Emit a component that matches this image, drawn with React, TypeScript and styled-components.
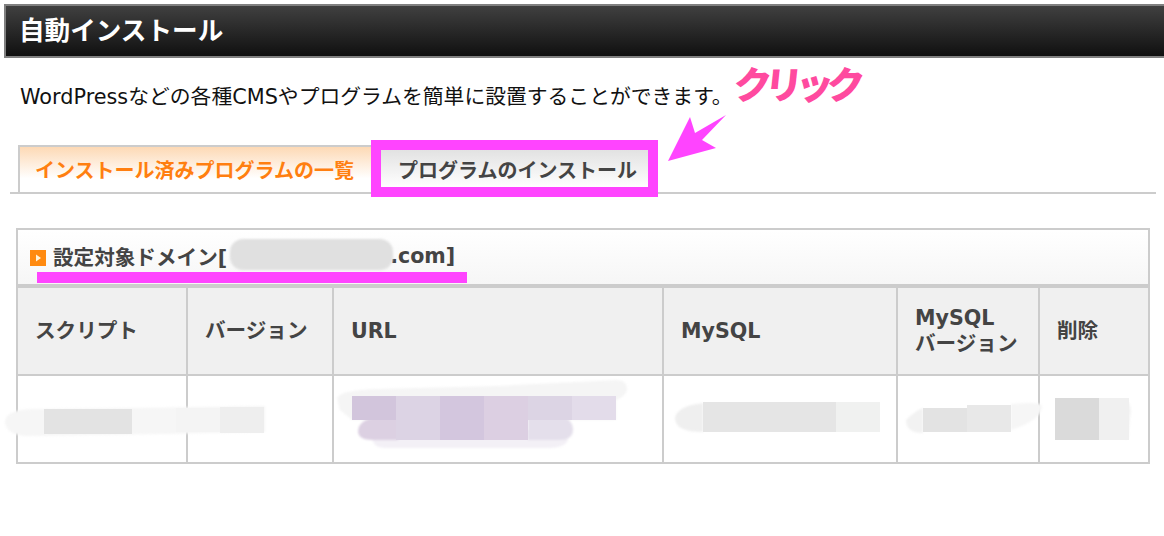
import React from "react";
import styled, { createGlobalStyle } from "styled-components";

const GlobalStyle = createGlobalStyle`
  html, body {
    margin: 0;
    padding: 0;
    background: #fff;
  }
  body {
    font-family: "DejaVu Sans", "Noto Sans CJK JP", sans-serif;
  }
`;

const Page = styled.div`
  position: relative;
  width: 1164px;
  height: 536px;
  overflow: hidden;
  padding-top: 4px;
  box-sizing: border-box;
`;

const Title = styled.h1`
  box-sizing: border-box;
  height: 54px;
  margin: 0 0 0 4px;
  padding-left: 13px;
  border: 2px solid #808080;
  border-right: 0;
  background: linear-gradient(#404040, #101010);
  color: #fff;
  font-size: 25.6px;
  font-weight: 700;
  line-height: 51px;
`;

const Intro = styled.p`
  margin: 24px 0 0 20px;
  color: #111;
  font-size: 20.8px;
  line-height: 30px;
  white-space: nowrap;
`;

const Tabs = styled.div`
  display: flex;
  align-items: flex-end;
  height: 47px;
  margin: 33px 8px 0 10px;
  padding-left: 8px;
  border-bottom: 2px solid #ccc;
`;

const ActiveTab = styled.div`
  box-sizing: border-box;
  width: 353px;
  height: 47px;
  padding-left: 15px;
  border: 2px solid #ccc;
  border-width: 2px 0 0 2px;
  background: linear-gradient(#fdd9b5, #fff 70%);
  color: #ff7f10;
  font-size: 20px;
  font-weight: 700;
  line-height: 49px;
`;

const Tab = styled.div`
  box-sizing: border-box;
  width: 287px;
  height: 57px;
  margin-bottom: -5px;
  padding-left: 17px;
  border: 10px solid #ff44ff;
  background: linear-gradient(#e2e2e2, #fff);
  color: #444;
  font-size: 20px;
  font-weight: 700;
  line-height: 42px;
`;

const Section = styled.section`
  margin: 34px 14px 0 16px;
`;

const SectionHead = styled.h2`
  box-sizing: border-box;
  display: flex;
  align-items: center;
  height: 58px;
  margin: 0;
  padding: 0 0 2px 14px;
  border: 2px solid #ccc;
  background: linear-gradient(#fff, #f6f6f6);
  color: #444;
  font-size: 20.6px;
  font-weight: 700;
`;

const Bullet = styled.svg`
  flex: none;
  margin: 4px 7px 0 -2px;
`;

const HiddenDomain = styled.span`
  display: inline-block;
  width: 163px;
`;

const Grid = styled.table`
  box-sizing: border-box;
  width: 1132px;
  border-collapse: collapse;
  table-layout: fixed;
`;

const Head = styled.th`
  box-sizing: border-box;
  height: 88px;
  padding: 0 0 0 17px;
  border: 2px solid #ccc;
  background: #f0f0f0;
  color: #444;
  font-size: 20.6px;
  font-weight: 700;
  line-height: 26px;
  text-align: left;
`;

const Cell = styled.td`
  box-sizing: border-box;
  height: 88px;
  border: 2px solid #ccc;
`;

const Overlay = styled.svg`
  position: absolute;
  top: 0;
  left: 0;
  pointer-events: none;
`;

const SoftGroup = styled.g`
  filter: blur(1px);
`;

const Click = styled.div`
  position: absolute;
  top: 54px;
  left: 734px;
  color: #ff4a9f;
  font-family: "Noto Sans CJK JP", sans-serif;
  font-size: 38px;
  font-weight: 900;
  letter-spacing: -7px;
  line-height: 58px;
  transform: skewX(-6deg);
  white-space: nowrap;
`;

const columns = [170, 146, 330, 234, 142, 110];

const blocks: [number, number, number, number, string][] = [
  [44, 409, 88, 25, "#e3e3e3"],
  [176, 408, 44, 24, "#f4f4f4"],
  [220, 407, 44, 26, "#eeeeee"],
  [352, 396, 44, 24, "#d2c5dc"],
  [396, 396, 44, 44, "#dcd3e4"],
  [440, 396, 44, 44, "#d3c6de"],
  [484, 396, 44, 44, "#dccfe2"],
  [528, 396, 44, 24, "#dcd4e4"],
  [572, 396, 44, 24, "#e3dcea"],
  [703, 402, 133, 30, "#e5e5e5"],
  [836, 402, 44, 30, "#f0f1f0"],
  [923, 408, 44, 24, "#e3e3e3"],
  [967, 405, 44, 27, "#e8e8e8"],
  [1055, 398, 44, 42, "#dadada"],
  [1099, 398, 30, 42, "#f0f0f0"],
];

const App: React.FC = () => (
  <Page>
    <GlobalStyle />
    <Title>自動インストール</Title>
    <Intro>WordPressなどの各種CMSやプログラムを簡単に設置することができます。</Intro>
    <Tabs>
      <ActiveTab>インストール済みプログラムの一覧</ActiveTab>
      <Tab>プログラムのインストール</Tab>
    </Tabs>
    <Section>
      <SectionHead>
        <Bullet width="16" height="16" viewBox="0 0 16 16">
          <rect width="16" height="16" fill="#ff8a10" />
          <path d="M6 4.5l5 3.5-5 3.5z" fill="#fff3d8" />
        </Bullet>
        設定対象ドメイン[<HiddenDomain />.com]
      </SectionHead>
      <Grid>
        <colgroup>
          {columns.map((width) => (
            <col key={width} width={width} />
          ))}
        </colgroup>
        <thead>
          <tr>
            <Head>スクリプト</Head>
            <Head>バージョン</Head>
            <Head>URL</Head>
            <Head>MySQL</Head>
            <Head>
              MySQL
              <br />
              バージョン
            </Head>
            <Head>削除</Head>
          </tr>
        </thead>
        <tbody>
          <tr>
            {columns.map((width) => (
              <Cell key={width} />
            ))}
          </tr>
        </tbody>
      </Grid>
    </Section>
    <Overlay width="1164" height="536" viewBox="0 0 1164 536">
      <SoftGroup>
        <rect x="230" y="239" width="163" height="31" rx="13" fill="#e0e0e0" />
        <path d="M5 421q2-12 30-12l100-1 130-2v26l-100 2-70 1-70 1q-20-2-20-15z" fill="#f6f6f6" />
        <path d="M337 398q4-8 40-9l120-3 120-6q10 0 10 10-2 7-11 10v20H352l-12-10z" fill="#f5f5f5" />
        <path d="M378 430h190q5 18-20 18H385q-20-2-7-18z" fill="#f3f0f6" />
        <path d="M358 431q1-12 20-14h20v23h-25q-15 0-15-9z" fill="#dcd0e2" />
        <path d="M528 416h30q15 2 15 14 0 10-15 10h-30z" fill="#e4dfeb" />
        <path d="M675 418q2-12 28-15v29q-28 0-28-14z" fill="#efefef" />
        <path d="M906 420q10-10 17-12v25q-17 0-17-13z" fill="#f2f2f2" />
        <path d="M1011 404q30-3 31 2 0 14-31 24z" fill="#f6f6f6" />
        <path d="M1125 399q8 6 5 18l-2 22h-3z" fill="#f3f3f3" />
      </SoftGroup>
      {blocks.map(([x, y, w, h, fill]) => (
        <rect key={`${x}-${y}`} x={x} y={y} width={w} height={h} fill={fill} />
      ))}
      <rect x="37" y="272" width="430" height="11" fill="#ff44ff" />
      <path d="M668 161l22-44 5 16 31-18-24 25 14 8z" fill="#ff44ff" />
    </Overlay>
    <Click>クリック</Click>
  </Page>
);

export default App;
